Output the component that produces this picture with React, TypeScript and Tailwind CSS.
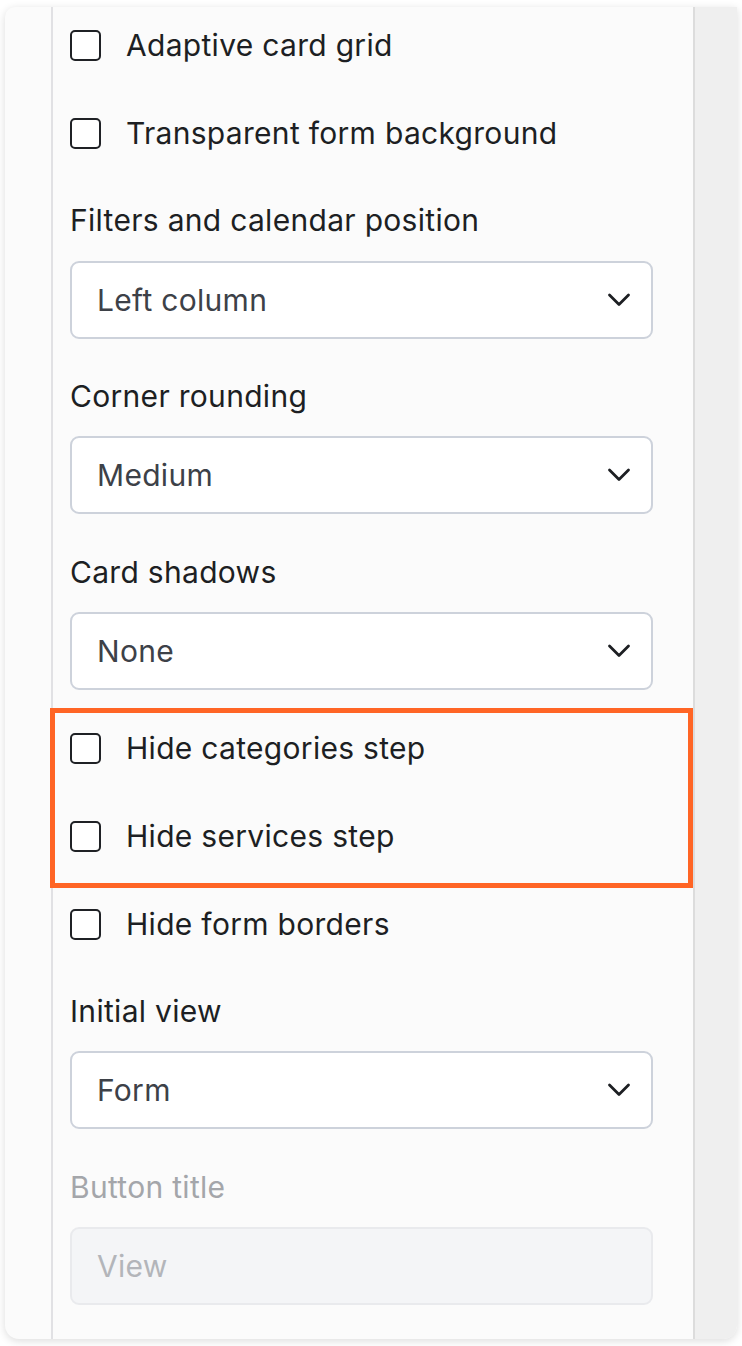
const Check = ({ label }: { label: string }) => (
  <label className="flex h-8 items-center gap-[25px]">
    <span className="h-[31px] w-[31px] shrink-0 rounded-[5px] border-2 border-[#1f2125] bg-white" />
    <span className="text-[#1d1f23]">{label}</span>
  </label>
);

const Chevron = () => (
  <svg width="24" height="14" viewBox="0 0 24 14" fill="none" className="shrink-0">
    <polyline points="2.5,2 12,11.5 21.5,2" stroke="#1d1f23" strokeWidth="2.8" strokeLinecap="round" strokeLinejoin="round" />
  </svg>
);

const Select = ({ value }: { value: string }) => (
  <div className="flex h-[78px] items-center justify-between rounded-[9px] border-2 border-[#cdd2db] bg-white pl-[25px] pr-[20px]">
    <span className="text-[#3d4148]">{value}</span>
    <Chevron />
  </div>
);

const Label = ({ text, muted }: { text: string; muted?: boolean }) => (
  <div className={`flex h-10 items-center ${muted ? "text-[#a4a6aa]" : "text-[#1d1f23]"}`}>{text}</div>
);

export default function App() {
  return (
    <div className="min-h-[1346px] bg-white px-[5px] pb-[7px] pt-[7px] font-['Inter','Noto_Sans',sans-serif] text-[30px] tracking-[0.01em]">
      <div className="flex h-[1332px] overflow-hidden rounded-b-[14px] rounded-tl-[10px] bg-[#fbfbfb] shadow-[0_2px_8px_rgba(0,0,0,0.14)]">
        {/* left gutter */}
        <div className="w-[48px] shrink-0 border-r-2 border-[#e1e1e4]" />

        {/* settings column */}
        <div className="flex w-[640px] shrink-0 flex-col pl-[17px] pr-10 pt-[22px]">
          <Check label="Adaptive card grid" />
          <div className="mt-14">
            <Check label="Transparent form background" />
          </div>

          <div className="mt-[51px]">
            <Label text="Filters and calendar position" />
          </div>
          <div className="mt-[21px]">
            <Select value="Left column" />
          </div>

          <div className="mt-[37px]">
            <Label text="Corner rounding" />
          </div>
          <div className="mt-5">
            <Select value="Medium" />
          </div>

          <div className="mt-[38px]">
            <Label text="Card shadows" />
          </div>
          <div className="mt-5">
            <Select value="None" />
          </div>

          <div className="relative mt-[42px] flex flex-col gap-14">
            <Check label="Hide categories step" />
            <Check label="Hide services step" />
            <div className="pointer-events-none absolute -bottom-9 -left-5 -right-10 -top-6 border-[5px] border-[#ff6525]" />
          </div>

          <div className="mt-14">
            <Check label="Hide form borders" />
          </div>

          <div className="mt-[51px]">
            <Label text="Initial view" />
          </div>
          <div className="mt-5">
            <Select value="Form" />
          </div>

          <div className="mt-[38px]">
            <Label text="Button title" muted />
          </div>
          <div className="mt-5 flex h-[78px] items-center rounded-[9px] border-2 border-[#e9eaed] bg-[#f4f5f7] pl-[25px] text-[#b3b5ba]">
            View
          </div>
        </div>

        {/* right panel */}
        <div className="flex-1 border-l-2 border-[#dcdcdc] bg-[#efefef]" />
      </div>
    </div>
  );
}
